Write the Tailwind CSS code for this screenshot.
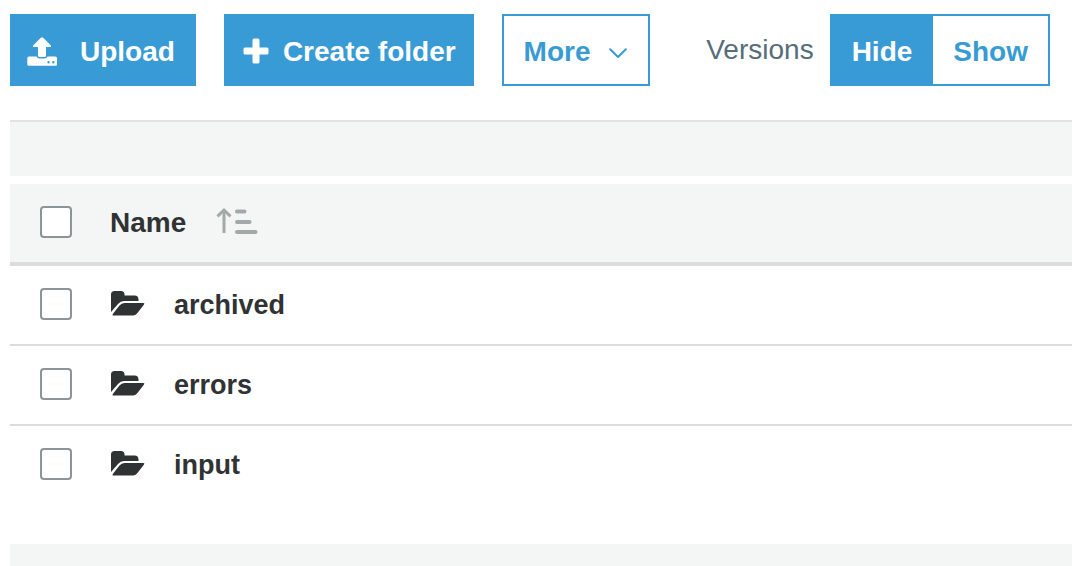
<!DOCTYPE html>
<html lang="en">
<head>
<meta charset="utf-8">
<meta name="viewport" content="width=device-width, initial-scale=1">
<title>Files</title>
<script src="https://cdn.jsdelivr.net/npm/@tailwindcss/browser@4"></script>
</head>
<body class="flex min-h-screen flex-col bg-white pl-[10px] font-['Liberation_Sans',Arial,sans-serif] text-[27px] leading-8 text-[#303333]">

<svg class="hidden" aria-hidden="true">
  <symbol id="folder" viewBox="0 0 34 28">
    <path d="M0 22V4.500Q0 1 3.500 1H10Q13.500 1 13.500 4.500V5.500H23.500Q27.500 5.500 27.500 9.500V11H13Q9.500 11 7 14Z"/>
    <path d="M13.500 13H32.500Q34 13 33 14.500L26 23.500Q24.500 25.500 22 25.500H2.500Q.7 25.500 1.800 24L8.500 15.500Q10.500 13 13.500 13Z"/>
  </symbol>
</svg>

<header class="flex pt-[14px] text-[28px] font-bold">
  <button type="button" class="flex h-[72px] cursor-pointer items-center gap-[22px] bg-[#399bd5] pt-1 pr-[21px] pl-4 text-white">
    <svg class="h-8 w-8" viewBox="0 0 32 32" fill="currentColor" aria-hidden="true">
      <path d="M16 1.200Q16.600 1.200 17.200 1.800L24.900 9.500Q25.800 11 24 11H20V19.500Q20 21 18.500 21H13.500Q12 21 12 19.500V11H8Q6.200 11 7.100 9.500L14.800 1.800Q15.400 1.200 16 1.200Z"/>
      <path fill-rule="evenodd" d="M3 20.500H10.500Q11.500 22.500 13.500 22.500H18.500Q20.500 22.500 21.500 20.500H29.500Q31 20.500 31 22V28.200Q31 29.700 29.500 29.700H3Q1.300 29.700 1.300 28.200V22Q1.300 20.500 3 20.500ZM22.600 25a1.200 1.200 0 1 0 0 2.400a1.200 1.200 0 1 0 0-2.400ZM27.300 25a1.200 1.200 0 1 0 0 2.400a1.200 1.200 0 1 0 0-2.400Z"/>
    </svg>
    Upload
  </button>
  <button type="button" class="ml-7 flex h-[72px] cursor-pointer items-center gap-[14px] bg-[#399bd5] pt-1 pr-[18px] pl-[19px] text-white">
    <svg class="mb-0.5 h-[26px] w-[26px]" viewBox="0 0 26 26" fill="currentColor" aria-hidden="true">
      <path d="M11 .5H15Q16.500 .5 16.500 2V9.500H24Q25.500 9.500 25.500 11V15Q25.500 16.500 24 16.500H16.500V24Q16.500 25.500 15 25.500H11Q9.500 25.500 9.500 24V16.500H2Q.5 16.500 .5 15V11Q.5 9.500 2 9.500H9.500V2Q9.500 .5 11 .5Z"/>
    </svg>
    Create folder
  </button>
  <button type="button" aria-haspopup="menu" class="ml-7 flex h-[72px] cursor-pointer items-center gap-[17px] border-2 border-[#399bd5] bg-white pt-1 pr-5 pl-5 text-[#399bd5]">
    More
    <svg class="h-3 w-5" viewBox="0 0 20 12" fill="none" stroke="currentColor" stroke-width="2" stroke-linecap="round" stroke-linejoin="round" aria-hidden="true"><path d="M2.200 3.200L10 11L17.800 3.200"/></svg>
  </button>
  <div class="ml-auto flex pr-[22px]" role="group" aria-labelledby="versions">
    <span id="versions" class="mr-4 self-center font-normal text-[#566d7a]">Versions</span>
    <button type="button" aria-pressed="true" class="h-[72px] cursor-pointer bg-[#399bd5] pt-1 pr-[21px] pl-[22px] text-white">Hide</button>
    <button type="button" aria-pressed="false" class="h-[72px] cursor-pointer border-2 border-l-0 border-[#399bd5] bg-white pt-1 pr-5 pl-5 text-[#399bd5]">Show</button>
  </div>
</header>

<main class="flex grow flex-col pt-[34px]">
  <div class="h-14 border-t-2 border-[#e1e3e3] bg-[#f4f6f6]"></div>
  <table class="mt-2 w-full border-separate border-spacing-0 text-left">
    <thead class="bg-[#f4f6f6] text-[28px]">
      <tr>
        <th scope="col" class="h-[82px] w-[100px] border-b-4 border-[#dbdcdc] pb-0.5 pl-[30px]"><input type="checkbox" aria-label="Select all" class="block h-8 w-8 appearance-none rounded-sm border-2 border-[#8c9595] bg-white checked:bg-[#399bd5]"></th>
        <th scope="col" class="border-b-4 border-[#dbdcdc]">
          <button type="button" class="flex cursor-pointer items-center gap-[30px]">Name
            <svg class="mb-1.5 h-7 w-[42px]" viewBox="0 0 42 28" fill="none" stroke="#a3a9a9" stroke-linecap="round" aria-hidden="true">
              <path stroke-width="3" stroke-linecap="butt" d="M8 27V4"/>
              <path stroke-width="3" stroke-linecap="butt" d="M1.500 10.300L8 4L14.500 10.300"/>
              <path stroke-width="4" d="M21 5.500H28.500M21 16H33.500M21 26H39.500"/>
            </svg>
          </button>
        </th>
      </tr>
    </thead>
    <tbody>
      <tr>
        <td class="h-20 border-b-2 border-[#dbdcdc] pb-0.5 pl-[30px]"><input type="checkbox" aria-label="Select archived" class="block h-8 w-8 appearance-none rounded-sm border-2 border-[#8c9595] bg-white checked:bg-[#399bd5]"></td>
        <td class="border-b-2 border-[#dbdcdc] font-bold"><a href="#archived" class="flex items-center gap-[29px]"><svg class="mb-0.5 ml-px h-7 w-[34px]" fill="currentColor" aria-hidden="true"><use href="#folder"/></svg>archived</a></td>
      </tr>
      <tr>
        <td class="h-20 border-b-2 border-[#dbdcdc] pb-0.5 pl-[30px]"><input type="checkbox" aria-label="Select errors" class="block h-8 w-8 appearance-none rounded-sm border-2 border-[#8c9595] bg-white checked:bg-[#399bd5]"></td>
        <td class="border-b-2 border-[#dbdcdc] font-bold"><a href="#errors" class="flex items-center gap-[29px]"><svg class="mb-0.5 ml-px h-7 w-[34px]" fill="currentColor" aria-hidden="true"><use href="#folder"/></svg>errors</a></td>
      </tr>
      <tr>
        <td class="h-20 border-b-2 border-transparent pb-0.5 pl-[30px]"><input type="checkbox" aria-label="Select input" class="block h-8 w-8 appearance-none rounded-sm border-2 border-[#8c9595] bg-white checked:bg-[#399bd5]"></td>
        <td class="border-b-2 border-transparent font-bold"><a href="#input" class="flex items-center gap-[29px]"><svg class="mb-0.5 ml-px h-7 w-[34px]" fill="currentColor" aria-hidden="true"><use href="#folder"/></svg>input</a></td>
      </tr>
    </tbody>
  </table>
  <div class="mt-[38px] grow bg-[#f4f6f6]"></div>
</main>
</body>
</html>
